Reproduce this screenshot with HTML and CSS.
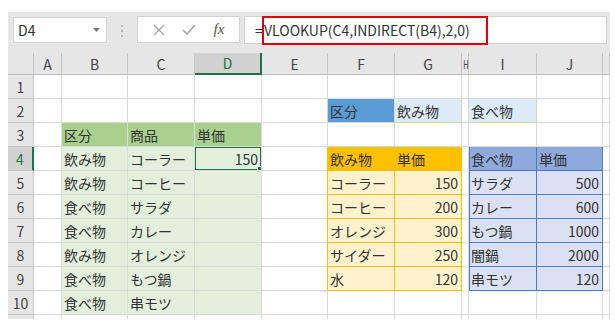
FILE: index.html
```html
<!DOCTYPE html>
<html lang="ja">
<head>
    <meta charset="UTF-8">
    <title>VLOOKUP INDIRECT</title>
    <link rel="stylesheet" href="styles.css">
</head>
<body>
    <div class="excel">
        <div class="formula-bar">
            <div class="name-box">
                <span>D4</span>
                <svg class="caret" width="7" height="4" viewBox="0 0 7 4"><path d="M0 0h7L3.5 4z" fill="#777"/></svg>
            </div>
            <svg class="grip" width="4" height="12" viewBox="0 0 4 12">
                <rect x="1" y="0" width="2" height="2" fill="#b5b5b5"/>
                <rect x="1" y="5" width="2" height="2" fill="#b5b5b5"/>
                <rect x="1" y="10" width="2" height="2" fill="#b5b5b5"/>
            </svg>
            <div class="fx-box">
                <svg width="12" height="12" viewBox="0 0 12 12"><path d="M1 1l10 10M11 1L1 11" stroke="#a6a6a6" stroke-width="1.3" fill="none"/></svg>
                <svg width="14" height="11" viewBox="0 0 14 11"><path d="M1 6l4 4 8-9" stroke="#a6a6a6" stroke-width="1.6" fill="none"/></svg>
                <span class="fx">fx</span>
            </div>
            <div class="formula-input">
                <span class="eq">=</span><span>VLOOKUP(C4,INDIRECT(B4),2,0)</span>
                <div class="highlight"></div>
            </div>
        </div>

        <table class="sheet">
            <colgroup>
                <col style="width:26px"><col style="width:28px"><col style="width:66px"><col style="width:67px">
                <col style="width:67px"><col style="width:66px"><col style="width:67px"><col style="width:67px">
                <col style="width:7px"><col style="width:68px"><col style="width:66px"><col style="width:7px">
            </colgroup>
            <tr class="col-head">
                <th class="corner"></th><th>A</th><th>B</th><th>C</th><th class="active">D</th><th>E</th>
                <th>F</th><th>G</th><th class="narrow"><span>H</span></th><th>I</th><th>J</th><th></th>
            </tr>
            <tr>
                <th>1</th><td></td><td></td><td></td><td></td><td></td><td></td><td></td><td></td><td></td><td></td><td></td>
            </tr>
            <tr>
                <th>2</th><td></td><td></td><td></td><td></td><td class="pre-f"></td>
                <td class="key">区分</td><td class="pale">飲み物</td><td class="pale-left"></td><td class="pale">食べ物</td><td></td><td></td>
            </tr>
            <tr>
                <th>3</th><td></td><td class="g-head">区分</td><td class="g-head">商品</td><td class="g-head">単価</td><td></td>
                <td></td><td></td><td></td><td></td><td></td><td></td>
            </tr>
            <tr>
                <th class="active">4</th><td></td><td class="g">飲み物</td><td class="g">コーラー</td><td class="g num sel">150</td><td class="pre-t"></td>
                <td class="y-head">飲み物</td><td class="y-head">単価</td><td class="gap"></td><td class="b-head">食べ物</td><td class="b-head">単価</td><td class="post-b"></td>
            </tr>
            <tr>
                <th>5</th><td></td><td class="g">飲み物</td><td class="g">コーヒー</td><td class="g"></td><td class="pre-t"></td>
                <td class="y">コーラー</td><td class="y num">150</td><td class="gap"></td><td class="b">サラダ</td><td class="b num">500</td><td class="post-b"></td>
            </tr>
            <tr>
                <th>6</th><td></td><td class="g">食べ物</td><td class="g">サラダ</td><td class="g"></td><td class="pre-t"></td>
                <td class="y">コーヒー</td><td class="y num">200</td><td class="gap"></td><td class="b">カレー</td><td class="b num">600</td><td class="post-b"></td>
            </tr>
            <tr>
                <th>7</th><td></td><td class="g">食べ物</td><td class="g">カレー</td><td class="g"></td><td class="pre-t"></td>
                <td class="y">オレンジ</td><td class="y num">300</td><td class="gap"></td><td class="b">もつ鍋</td><td class="b num">1000</td><td class="post-b"></td>
            </tr>
            <tr>
                <th>8</th><td></td><td class="g">飲み物</td><td class="g">オレンジ</td><td class="g"></td><td class="pre-t"></td>
                <td class="y">サイダー</td><td class="y num">250</td><td class="gap"></td><td class="b">闇鍋</td><td class="b num">2000</td><td class="post-b"></td>
            </tr>
            <tr>
                <th>9</th><td></td><td class="g">食べ物</td><td class="g">もつ鍋</td><td class="g"></td><td class="pre-t"></td>
                <td class="y">水</td><td class="y num">120</td><td class="gap"></td><td class="b">串モツ</td><td class="b num">120</td><td class="post-b"></td>
            </tr>
            <tr>
                <th>10</th><td></td><td class="g">食べ物</td><td class="g">串モツ</td><td class="g"></td><td></td>
                <td></td><td></td><td></td><td></td><td></td><td></td>
            </tr>
            <tr class="cut">
                <th></th><td></td><td></td><td></td><td></td><td></td><td></td><td></td><td></td><td></td><td></td><td></td>
            </tr>
        </table>
    </div>
</body>
</html>
```

FILE: styles.css
```css
body {
    margin: 0;
    background: #fff;
    font-family: "Noto Sans CJK JP", "Noto Sans", sans-serif;
    color: #333;
}
.excel {
    margin: 12px 0 0 8px;
    width: 602px;
}

/* formula bar */
.formula-bar {
    display: flex;
    align-items: flex-start;
    height: 41px;
    padding: 4px 3px 0 5px;
    box-sizing: border-box;
    background: #e6e6e6;
}
.name-box {
    display: flex;
    align-items: center;
    justify-content: space-between;
    width: 94px;
    height: 26px;
    margin-top: 1px;
    padding: 0 6px 0 4px;
    box-sizing: border-box;
    background: #fff;
    border: 1px solid #d2d2d2;
    font-size: 14px;
}
.grip {
    margin: 9px 13px 0 13px;
}
.fx-box {
    display: flex;
    align-items: center;
    justify-content: space-around;
    width: 103px;
    height: 27px;
    padding: 0 6px;
    box-sizing: border-box;
    background: #fff;
    border: 1px solid #d2d2d2;
}
.fx {
    font-family: "Liberation Serif", serif;
    font-style: italic;
    font-size: 15px;
    color: #555;
}
.formula-input {
    position: relative;
    flex: 1;
    height: 28px;
    margin-left: 4px;
    padding-left: 10px;
    box-sizing: border-box;
    background: #fff;
    border: 1px solid #d2d2d2;
    font-size: 14px;
    line-height: 26px;
    color: #333;
}
.eq {
    display: inline-block;
    width: 9px;
}
.highlight {
    position: absolute;
    left: 17px;
    top: -1px;
    width: 226px;
    height: 29px;
    border: 2px solid #e60000;
    box-sizing: border-box;
}

/* sheet */
.sheet {
    table-layout: fixed;
    width: 602px;
    border-spacing: 0;
    font-size: 14px;
}
.sheet th, .sheet td {
    box-sizing: border-box;
    height: 24px;
    padding: 0 2px;
    border-right: 1px solid #dadada;
    border-bottom: 1px solid #dadada;
    white-space: nowrap;
    overflow: hidden;
    vertical-align: bottom;
    line-height: 21px;
}
.sheet th {
    background: #e6e6e6;
    font-weight: normal;
    color: #444;
    text-align: center;
    border-color: #c6c6c6;
}
.col-head th {
    height: 21px;
    line-height: 20px;
    vertical-align: middle;
    border-bottom-color: #bdbdbd;
}
.corner {
    background: linear-gradient(135deg, #e6e6e6 52%, #b8b8b8 52%) no-repeat;
    background-size: 18px 18px;
    background-position: right 3px bottom 2px;
}
.col-head .narrow {
    padding: 0;
    overflow: visible;
}
.narrow span {
    display: inline-block;
    width: 6px;
    font-size: 12px;
    transform: scaleX(0.6);
}
.sheet th.active {
    background: #d2d2d2;
    color: #217346;
}
.col-head th.active {
    border-bottom: 2px solid #217346;
}
tr th.active {
    border-right: 2px solid #217346;
}
.cut th, .cut td {
    height: 4px;
    line-height: 4px;
    border-bottom: none;
}

.num {
    text-align: right;
}
.sheet td.num {
    padding-right: 3px;
}

/* table colours */
.g-head {
    background: #a9d08e;
}
.g {
    background: #e2efda;
}
.key {
    background: #5b9bd5;
}
.sheet .pale {
    background: #ddebf7;
    border-color: #c6e0b4;
}
.pale-left {
    box-shadow: inset 0 -1px #fff;
}
.sheet .pre-f {
    border-right-color: #c6e0b4;
}
.y-head {
    background: #ffc000;
}
.sheet .y, .sheet .y-head {
    border-color: #ffc000;
}
.y {
    background: #fff2cc;
}
.sheet .pre-t {
    border-right-color: #ffc000;
}
.sheet .gap {
    border-bottom-color: #fff;
}
.b-head {
    background: #8ea9db;
}
.b {
    background: #d9e1f2;
}
.sheet .b, .sheet .b-head {
    border-color: #4f79c8;
}
.b-head:nth-child(10), .b:nth-child(10) {
    box-shadow: inset 1px 0 #4f79c8;
}
.sel {
    position: relative;
}
.sel::after {
    content: "";
    position: absolute;
    left: -1px;
    top: -1px;
    right: -1px;
    bottom: -1px;
    border: 2px solid #217346;
}
.sel::before {
    content: "";
    position: absolute;
    right: -3px;
    bottom: -3px;
    width: 5px;
    height: 5px;
    background: #217346;
    border: 1px solid #fff;
    z-index: 1;
}
```
